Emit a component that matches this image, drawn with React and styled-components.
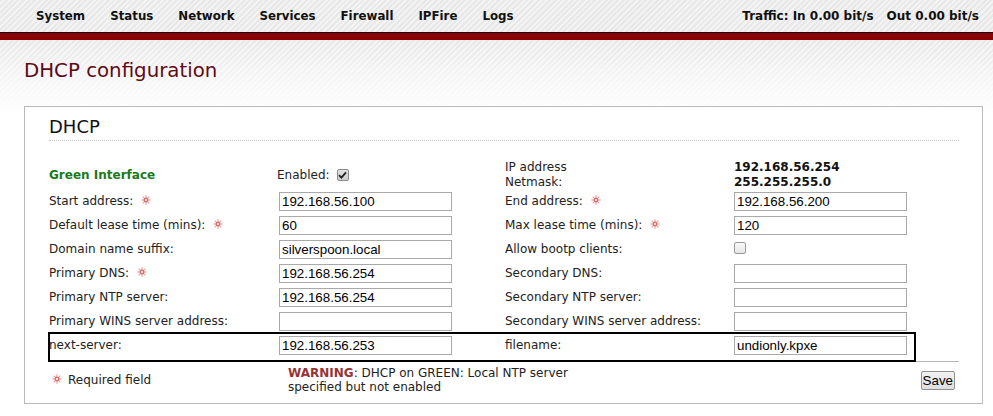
import React from "react";
import styled, { createGlobalStyle } from "styled-components";

const GlobalStyle = createGlobalStyle`
  html, body {
    margin: 0;
    padding: 0;
    background: #fff;
  }
  body {
    font-family: "DejaVu Sans", Verdana, sans-serif;
    color: #222;
  }
`;

const stripes = `repeating-linear-gradient(135deg, #e8e8e8 0px, #e8e8e8 2px, #f3f3f3 2px, #f3f3f3 4px)`;

const Header = styled.header`
  height: 32px;
  display: flex;
  align-items: center;
  justify-content: space-between;
  padding: 0 14px 0 36px;
  background: ${stripes};
`;

const Nav = styled.nav`
  display: flex;
  gap: 25px;
`;

const NavItem = styled.a`
  font-size: 11.8px;
  font-weight: bold;
  color: #111;
  text-decoration: none;
`;

const Traffic = styled.div`
  display: flex;
  gap: 13px;
  font-size: 12px;
  font-weight: bold;
  color: #111;
`;

const RedBar = styled.div`
  height: 7px;
  border-top: 1px solid #111;
  background: #8b0000;
`;

const Content = styled.main`
  padding: 0 10px 10px 24px;
  background: linear-gradient(
      to bottom,
      rgba(255, 255, 255, 0) 0px,
      rgba(255, 255, 255, 0.55) 35px,
      #fff 75px
    ),
    ${stripes};
`;

const Title = styled.h1`
  margin: 0;
  padding-top: 18px;
  font-size: 19.8px;
  line-height: 26px;
  font-weight: normal;
  color: #5e0a16;
`;

const Box = styled.section`
  margin-top: 22px;
  border: 1px solid #bbb;
  background: #fff;
  padding: 10px 23px 9px 24px;
`;

const BoxTitle = styled.h2`
  margin: 0;
  padding-bottom: 3px;
  font-size: 18px;
  line-height: 20px;
  font-weight: normal;
  color: #111;
  border-bottom: 1px dotted #c8c8c8;
`;

const Table = styled.div`
  margin-top: 18px;
`;

const Row = styled.div`
  display: grid;
  grid-template-columns: 230px 226px 229px 225px;
  align-items: center;
  height: ${(p) => (p.$tall ? "30px" : "24px")};
  box-sizing: border-box;
  font-size: 12px;
  color: #222;

  ${(p) =>
    p.$marked &&
    `
    width: 866px;
    height: 28px;
    padding-bottom: 4px;
    outline: 2px solid #000;
    outline-offset: -1px;
  `}
`;

const Label = styled.span`
  display: flex;
  align-items: center;
  white-space: nowrap;
`;

const GreenLabel = styled.span`
  font-weight: bold;
  color: #1a7a1a;
`;

const Enabled = styled.span`
  display: flex;
  align-items: center;
  gap: 7px;
  margin: 1px 0 0 -2px;
`;

const Stack = styled.div`
  display: flex;
  flex-direction: column;
  margin-top: 1px;
  line-height: 15px;
`;

const Value = styled.div`
  font-weight: bold;
  color: #111;
  line-height: 15px;
`;

const Input = styled.input`
  box-sizing: border-box;
  width: 173px;
  height: 19px;
  margin: 0;
  padding: 0 2px;
  border: 1px solid #a9a9a9;
  font-family: "Liberation Sans", Arial, sans-serif;
  font-size: 13.33px;
  color: #000;
  background: #fff;
`;

const Check = styled.span`
  display: inline-flex;
  align-items: center;
  justify-content: center;
  box-sizing: border-box;
  width: 12px;
  height: 12px;
  border: 1px solid ${(p) => (p.$checked ? "#8a8a8a" : "#9a9a9a")};
  border-radius: 2px;
  background: ${(p) =>
    p.$checked ? "linear-gradient(#e2e2e2, #cfcfcf)" : "linear-gradient(#fafafa, #e6e6e6)"};
`;

const Hr = styled.div`
  height: 1px;
  background: #b5b5b5;
`;

const Footer = styled.div`
  display: flex;
  align-items: flex-start;
  padding-top: 4px;
  font-size: 12px;
  color: #222;
`;

const Required = styled.div`
  width: 227px;
  padding-left: 3px;
  padding-top: 7px;
  display: flex;
  align-items: center;
  gap: 6px;
`;

const Warning = styled.div`
  width: 300px;
  padding-left: 9px;
  line-height: 14px;

  & b {
    color: #993333;
  }
`;

const SaveButton = styled.button`
  margin: 5px 4px 0 auto;
  padding: 0 1px;
  height: 19px;
  font-family: "Liberation Sans", Arial, sans-serif;
  font-size: 13.33px;
  color: #000;
  background: linear-gradient(#f2f2f2, #dedede);
  border: 1px solid #8f8f8f;
  border-radius: 2px;
`;

const StarIcon = styled.svg`
  flex: none;
  margin-left: ${(p) => (p.$inline ? "8px" : "0")};
  margin-top: -3px;
`;

const Star = ({ inline }) => (
  <StarIcon $inline={inline} width="10" height="10" viewBox="0 0 10 10">
    <g stroke="#ee9a9a" strokeWidth="1.1">
      <line x1="5" y1="0.3" x2="5" y2="9.7" />
      <line x1="0.3" y1="5" x2="9.7" y2="5" />
      <line x1="1.7" y1="1.7" x2="8.3" y2="8.3" />
      <line x1="8.3" y1="1.7" x2="1.7" y2="8.3" />
    </g>
    <circle cx="5" cy="5" r="1.9" fill="#fde4e4" stroke="#d84a4a" strokeWidth="1" />
  </StarIcon>
);

const Tick = () => (
  <svg width="9" height="8" viewBox="0 0 9 8">
    <path d="M1 4.2 L3.4 6.6 L8 1.4" fill="none" stroke="#222" strokeWidth="1.8" />
  </svg>
);

const rows = [
  {
    left: "Start address:",
    leftReq: true,
    leftVal: "192.168.56.100",
    right: "End address:",
    rightReq: true,
    rightVal: "192.168.56.200",
  },
  {
    left: "Default lease time (mins):",
    leftReq: true,
    leftVal: "60",
    right: "Max lease time (mins):",
    rightReq: true,
    rightVal: "120",
  },
  {
    left: "Domain name suffix:",
    leftVal: "silverspoon.local",
    right: "Allow bootp clients:",
    rightCheck: true,
  },
  {
    left: "Primary DNS:",
    leftReq: true,
    leftVal: "192.168.56.254",
    right: "Secondary DNS:",
    rightVal: "",
  },
  {
    left: "Primary NTP server:",
    leftVal: "192.168.56.254",
    right: "Secondary NTP server:",
    rightVal: "",
  },
  {
    left: "Primary WINS server address:",
    leftVal: "",
    right: "Secondary WINS server address:",
    rightVal: "",
  },
  {
    left: "next-server:",
    leftVal: "192.168.56.253",
    right: "filename:",
    rightVal: "undionly.kpxe",
    marked: true,
  },
];

const navItems = ["System", "Status", "Network", "Services", "Firewall", "IPFire", "Logs"];

export default function App() {
  return (
    <>
      <GlobalStyle />
      <Header>
        <Nav>
          {navItems.map((item) => (
            <NavItem key={item}>{item}</NavItem>
          ))}
        </Nav>
        <Traffic>
          <span>Traffic: In 0.00 bit/s</span>
          <span>Out 0.00 bit/s</span>
        </Traffic>
      </Header>
      <RedBar />
      <Content>
        <Title>DHCP configuration</Title>
        <Box>
          <BoxTitle>DHCP</BoxTitle>
          <Table>
            <Row $tall>
              <GreenLabel>Green Interface</GreenLabel>
              <Enabled>
                Enabled:
                <Check $checked>
                  <Tick />
                </Check>
              </Enabled>
              <Stack>
                <span>IP address</span>
                <span>Netmask:</span>
              </Stack>
              <Stack>
                <Value>192.168.56.254</Value>
                <Value>255.255.255.0</Value>
              </Stack>
            </Row>
            {rows.map((r) => (
              <Row key={r.left} $marked={r.marked}>
                <Label>
                  {r.left}
                  {r.leftReq && <Star inline />}
                </Label>
                <div>
                  <Input defaultValue={r.leftVal} />
                </div>
                <Label>
                  {r.right}
                  {r.rightReq && <Star inline />}
                </Label>
                <div>
                  {r.rightCheck ? <Check /> : <Input defaultValue={r.rightVal} />}
                </div>
              </Row>
            ))}
          </Table>
          <Hr />
          <Footer>
            <Required>
              <Star />
              <span>Required field</span>
            </Required>
            <Warning>
              <b>WARNING</b>: DHCP on GREEN: Local NTP server specified but not enabled
            </Warning>
            <SaveButton>Save</SaveButton>
          </Footer>
        </Box>
      </Content>
    </>
  );
}
